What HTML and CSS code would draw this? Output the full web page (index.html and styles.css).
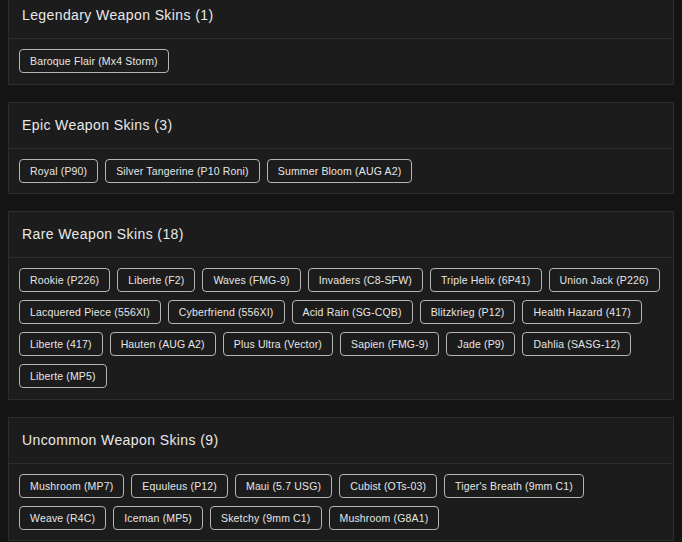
FILE: index.html
```html
<!DOCTYPE html>
<html lang="en">
<head>
    <meta charset="UTF-8">
    <meta name="viewport" content="width=device-width, initial-scale=1.0">
    <title>Weapon Skins</title>
    <link rel="stylesheet" href="styles.css">
</head>
<body>
    <div class="container">
        <div class="skin-card">
            <div class="skin-header">Legendary Weapon Skins (1)</div>
            <div class="skin-list">
                <span class="skin-tag">Baroque Flair (Mx4 Storm)</span>
            </div>
        </div>

        <div class="skin-card">
            <div class="skin-header">Epic Weapon Skins (3)</div>
            <div class="skin-list">
                <span class="skin-tag">Royal (P90)</span>
                <span class="skin-tag">Silver Tangerine (P10 Roni)</span>
                <span class="skin-tag">Summer Bloom (AUG A2)</span>
            </div>
        </div>

        <div class="skin-card">
            <div class="skin-header">Rare Weapon Skins (18)</div>
            <div class="skin-list">
                <span class="skin-tag">Rookie (P226)</span>
                <span class="skin-tag">Liberte (F2)</span>
                <span class="skin-tag">Waves (FMG-9)</span>
                <span class="skin-tag">Invaders (C8-SFW)</span>
                <span class="skin-tag">Triple Helix (6P41)</span>
                <span class="skin-tag">Union Jack (P226)</span>
                <span class="skin-tag">Lacquered Piece (556XI)</span>
                <span class="skin-tag">Cyberfriend (556XI)</span>
                <span class="skin-tag">Acid Rain (SG-CQB)</span>
                <span class="skin-tag">Blitzkrieg (P12)</span>
                <span class="skin-tag">Health Hazard (417)</span>
                <span class="skin-tag">Liberte (417)</span>
                <span class="skin-tag">Hauten (AUG A2)</span>
                <span class="skin-tag">Plus Ultra (Vector)</span>
                <span class="skin-tag">Sapien (FMG-9)</span>
                <span class="skin-tag">Jade (P9)</span>
                <span class="skin-tag">Dahlia (SASG-12)</span>
                <span class="skin-tag">Liberte (MP5)</span>
            </div>
        </div>

        <div class="skin-card">
            <div class="skin-header">Uncommon Weapon Skins (9)</div>
            <div class="skin-list">
                <span class="skin-tag">Mushroom (MP7)</span>
                <span class="skin-tag">Equuleus (P12)</span>
                <span class="skin-tag">Maui (5.7 USG)</span>
                <span class="skin-tag">Cubist (OTs-03)</span>
                <span class="skin-tag">Tiger's Breath (9mm C1)</span>
                <span class="skin-tag">Weave (R4C)</span>
                <span class="skin-tag">Iceman (MP5)</span>
                <span class="skin-tag">Sketchy (9mm C1)</span>
                <span class="skin-tag">Mushroom (G8A1)</span>
            </div>
        </div>
    </div>
</body>
</html>
```

FILE: styles.css
```css
/* Basic Reset */
* {
    margin: 0;
    padding: 0;
    box-sizing: border-box;
}

body {
    font-family: 'Liberation Sans', Arial, sans-serif;
    background: #141414;
    color: #e4e4e4;
    margin: 0 8px;
    overflow: hidden;
}

/* page is scrolled a little, first card starts above the fold */
.container {
    margin-top: -8px;
}

.skin-card {
    background: #1c1c1c;
    border: 1px solid #2d2d2d;
    margin-bottom: 17px;
}

.skin-header {
    height: 46px;
    line-height: 45px;
    padding: 0 13px;
    font-size: 14px;
    letter-spacing: 0.4px;
    color: #e8e8e8;
    border-bottom: 1px solid #2d2d2d;
}

.skin-list {
    display: flex;
    flex-wrap: wrap;
    gap: 8px 7px;
    padding: 10px 10px 10.5px;
}

.skin-tag {
    display: inline-block;
    height: 24px;
    line-height: 22px;
    padding: 0 10px;
    font-size: 10.5px;
    letter-spacing: 0.16px;
    color: #e6e6e6;
    border: 1px solid #b4b4b4;
    border-radius: 4px;
    white-space: nowrap;
}
```
